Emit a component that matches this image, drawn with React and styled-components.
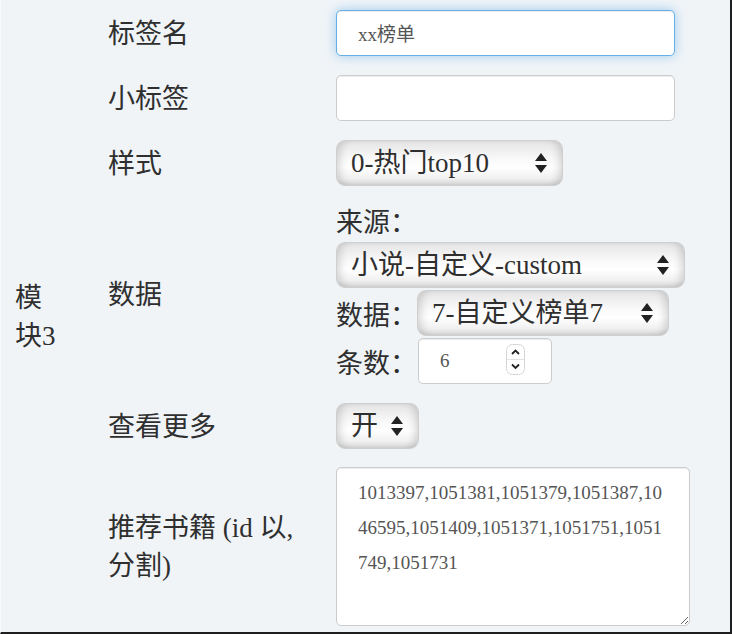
import styled, { createGlobalStyle } from 'styled-components';

const GlobalStyle = createGlobalStyle`
    html, body {
        margin: 0;
        padding: 0;
        background: #f0f4f7;
    }
    * {
        box-sizing: border-box;
    }
`;

const fontStack = `"Liberation Serif", "Noto Sans CJK SC", serif`;

const Panel = styled.div`
    display: grid;
    grid-template-columns: 92px 243px 1fr;
    width: 732px;
    height: 634px;
    background: #f0f4f7;
    border-left: 1px solid #f8fafc;
    border-right: 2px solid #1e1e1e;
    border-bottom: 2px solid #1e1e1e;
    font-family: ${fontStack};
    color: #2f2f2f;
`;

const ModuleCell = styled.div`
    grid-column: 1;
    grid-row: 1 / span 6;
    align-self: center;
    padding: 0 32px 0 14px;
    font-size: 27px;
    line-height: 38px;
`;

const Label = styled.div`
    grid-column: 2;
    align-self: center;
    padding: 2px 20px 0 15px;
    font-size: 27px;
    line-height: 38px;
`;

const Field = styled.div`
    grid-column: 3;
    padding: ${({ $pad }) => $pad || '9.5px 0'};
`;

const TextInput = styled.input`
    display: block;
    width: ${({ $w }) => $w}px;
    height: 46px;
    padding: 0 0 0 ${({ $pl }) => $pl || 21}px;
    border: 1px solid ${({ $focused }) => ($focused ? '#66afe9' : '#cccccc')};
    border-radius: 5px;
    background: #fff;
    font-family: ${fontStack};
    font-size: 19px;
    color: #555;
    outline: none;
    box-shadow: ${({ $focused }) => ($focused
        ? 'inset 0 1px 1px rgba(0,0,0,.075), 0 0 11px rgba(102,175,233,.6)'
        : 'inset 0 1px 1px rgba(0,0,0,.075)')};
    -moz-appearance: textfield;
    &::-webkit-inner-spin-button,
    &::-webkit-outer-spin-button {
        -webkit-appearance: none;
        margin: 0;
    }
`;

const SelectWrap = styled.div`
    position: relative;
    width: ${({ $w }) => $w}px;
    height: 46px;
    flex: none;
`;

const Select = styled.select`
    appearance: none;
    -webkit-appearance: none;
    width: 100%;
    height: 100%;
    padding: 0 34px 0 14px;
    border: 1px solid #cfcfcf;
    border-radius: 9px;
    background: linear-gradient(to bottom, #e4e4e4 0%, #f9f9f9 40%, #ffffff 60%, #f0f0f0 85%, #d6d6d6 100%);
    box-shadow: inset 8px 0 8px -5px rgba(0,0,0,0.16), inset -8px 0 8px -5px rgba(0,0,0,0.16);
    font-family: ${fontStack};
    font-size: 27px;
    color: #2f2f2f;
    outline: none;
`;

const ArrowIcon = styled.svg`
    position: absolute;
    right: 16px;
    top: 50%;
    transform: translateY(-50%);
    pointer-events: none;
`;

const SubLine = styled.div`
    font-size: 27px;
    line-height: 38px;
`;

const SubRow = styled.div`
    display: flex;
    align-items: center;
    margin-top: ${({ $mt }) => $mt || 0}px;
    font-size: 27px;
`;

const NumberWrap = styled.div`
    position: relative;
    width: 134px;
    height: 46px;
    margin-left: 1px;
`;

const Spinner = styled.svg`
    position: absolute;
    left: 88px;
    top: 6px;
    pointer-events: none;
`;

const TextArea = styled.textarea`
    display: block;
    width: 354px;
    height: 159px;
    padding: 7px 21px 0 21px;
    border: 1px solid #cccccc;
    border-radius: 5px;
    background: #fff;
    font-family: ${fontStack};
    font-size: 19px;
    line-height: 35px;
    color: #555;
    word-break: break-all;
    outline: none;
    box-shadow: inset 0 1px 1px rgba(0,0,0,.075);
`;

const Arrows = () => (
    <ArrowIcon width="12" height="20" viewBox="0 0 12 20">
        <path d="M6 0 L12 8 L0 8 Z" fill="#222" />
        <path d="M0 12 L12 12 L6 20 Z" fill="#222" />
    </ArrowIcon>
);

const Dropdown = ({ width, value, options }) => (
    <SelectWrap $w={width}>
        <Select defaultValue={value}>
            {options.map(option => <option key={option}>{option}</option>)}
        </Select>
        <Arrows />
    </SelectWrap>
);

const books = '1013397,1051381,1051379,1051387,1046595,1051409,1051371,1051751,1051749,1051731';

const App = () => {
    return (
        <>
            <GlobalStyle />
            <Panel>
                <ModuleCell>模块3</ModuleCell>

                <Label>标签名</Label>
                <Field>
                    <TextInput $w={339} $focused defaultValue="xx榜单" />
                </Field>

                <Label>小标签</Label>
                <Field>
                    <TextInput $w={339} defaultValue="" />
                </Field>

                <Label>样式</Label>
                <Field>
                    <Dropdown width={227} value="0-热门top10" options={['0-热门top10']} />
                </Field>

                <Label>数据</Label>
                <Field $pad="9px 0">
                    <SubLine>来源：</SubLine>
                    <Dropdown width={349} value="小说-自定义-custom" options={['小说-自定义-custom']} />
                    <SubRow $mt={2}>
                        数据：
                        <Dropdown width={252} value="7-自定义榜单7" options={['7-自定义榜单7']} />
                    </SubRow>
                    <SubRow $mt={2}>
                        条数：
                        <NumberWrap>
                            <TextInput type="number" $w={134} defaultValue={6} />
                            <Spinner width="19" height="31" viewBox="0 0 19 31">
                                <rect x="0.5" y="0.5" width="18" height="30" rx="6" fill="#fff" stroke="#d6d6d6" />
                                <line x1="1" y1="15.5" x2="18" y2="15.5" stroke="#e2e2e2" />
                                <path d="M6 10 L9.5 6.5 L13 10" fill="none" stroke="#222" strokeWidth="1.8" />
                                <path d="M6 20.5 L9.5 24 L13 20.5" fill="none" stroke="#222" strokeWidth="1.8" />
                            </Spinner>
                        </NumberWrap>
                    </SubRow>
                </Field>

                <Label>查看更多</Label>
                <Field>
                    <Dropdown width={83} value="开" options={['开', '关']} />
                </Field>

                <Label>推荐书籍 (id 以, 分割)</Label>
                <Field $pad="9px 0 7px">
                    <TextArea defaultValue={books} />
                </Field>
            </Panel>
        </>
    );
};

export default App;
